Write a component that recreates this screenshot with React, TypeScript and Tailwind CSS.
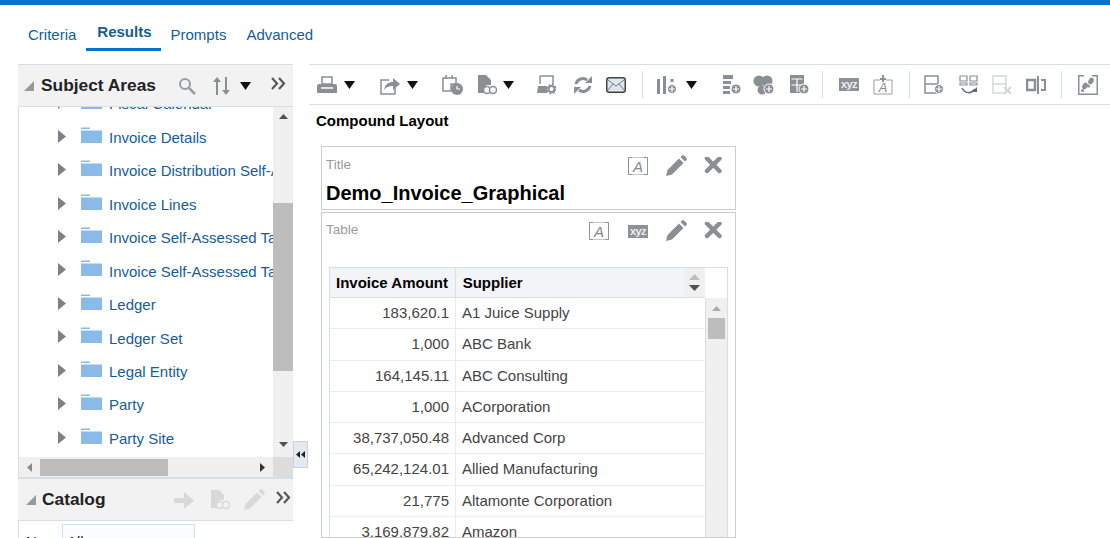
import { ReactNode } from "react";

const gray = "#8a8f94";

const Down = ({ className = "" }: { className?: string }) => (
  <svg width="13" height="8" viewBox="0 0 13 8" className={className}>
    <path d="M1 0h11L6.500 8z" fill="#111" />
  </svg>
);

const Svg = ({ w = 20, h = 20, children }: { w?: number; h?: number; children: ReactNode }) => (
  <svg width={w} height={h} viewBox={`0 0 ${w} ${h}`} className="shrink-0">
    {children}
  </svg>
);

const PlusBadge = ({ x = 14, y = 14, r = 5 }: { x?: number; y?: number; r?: number }) => (
  <g>
    <circle cx={x} cy={y} r={r} fill={gray} stroke="#fff" strokeWidth="1" />
    <path d={`M${x - 3} ${y}h6M${x} ${y - 3}v6`} stroke="#fff" strokeWidth="1.200" />
  </g>
);

const Pencil = ({ fill = gray }: { fill?: string }) => (
  <Svg w={22} h={22}>
    <path d="M1 21l1.500-6L14 3.500l4.500 4.500L7 19.500z M15.500 2l1.500-1.500a1.500 1.500 0 0 1 2 0l2.500 2.500a1.500 1.500 0 0 1 0 2L20 6.500z" fill={fill} />
  </Svg>
);

const Cross = () => (
  <Svg w={20} h={18}>
    <path d="M4 1.500l12.500 12.500M16.500 1.500L4 14" stroke={gray} strokeWidth="4.500" strokeLinecap="round" />
  </Svg>
);

const TextIcon = () => (
  <svg width="20" height="18" viewBox="0 0 20 18" className="shrink-0">
    <path d="M.500 .500h19v17H.500z" fill="none" stroke="#c4c7ca" strokeWidth="1" />
    <path d="M4 .500H.500v17H4M16 .500h3.500v17H16" fill="none" stroke="#8f9397" strokeWidth="1" />
    <text x="10" y="14.500" textAnchor="middle" fontFamily="Liberation Sans, sans-serif" fontStyle="italic" fontSize="15" fill="#85898d">A</text>
  </svg>
);

const Xyz = () => (
  <span className="w-[20px] h-[13px] bg-[#8e9296] text-[#eceef0] text-[11px] leading-[13px] text-center font-bold shrink-0 tracking-[-0.5px]">xyz</span>
);

const Folder = () => (
  <svg width="21" height="17" viewBox="0 0 21 17" className="shrink-0">
    <path d="M0 0.500h9v1.500H0z" fill="#8abbe8" />
    <path d="M0 3.500h21V16H0z" fill="#8abbe8" />
  </svg>
);

const Tri = ({ className = "" }: { className?: string }) => (
  <svg width="8" height="13" viewBox="0 0 8 13" className={className}>
    <path d="M0 0l8 6.500L0 13z" fill="#7d8185" />
  </svg>
);

const Chevrons = () => (
  <svg width="15" height="13" viewBox="0 0 15 13" className="shrink-0">
    <path d="M1 1l5 5.500L1 12M8 1l5 5.500L8 12" fill="none" stroke="#55595d" strokeWidth="2.200" />
  </svg>
);

const Corner = () => (
  <svg width="10" height="10" viewBox="0 0 10 10" className="shrink-0">
    <path d="M10 0v10H0z" fill="#9a9a9a" />
  </svg>
);

const folders = [
  "Fiscal Calendar",
  "Invoice Details",
  "Invoice Distribution Self-Assessed",
  "Invoice Lines",
  "Invoice Self-Assessed Tax",
  "Invoice Self-Assessed Tax Lines",
  "Ledger",
  "Ledger Set",
  "Legal Entity",
  "Party",
  "Party Site",
];

const rows = [
  ["183,620.1", "A1 Juice Supply"],
  ["1,000", "ABC Bank"],
  ["164,145.11", "ABC Consulting"],
  ["1,000", "ACorporation"],
  ["38,737,050.48", "Advanced Corp"],
  ["65,242,124.01", "Allied Manufacturing"],
  ["21,775", "Altamonte Corporation"],
  ["3,169,879.82", "Amazon"],
];

const Sep = ({ className = "" }: { className?: string }) => (
  <span className={`w-px h-[27px] bg-[#d6dfe6] shrink-0 ${className}`} />
);

const Toolbar = () => (
  <div className="h-[41px] border-y border-[#d6dfe6] flex items-center pl-[8px] overflow-hidden shrink-0">
    <Svg>
      <path d="M5 2h10v7H5z" fill="none" stroke={gray} strokeWidth="1.500" />
      <path d="M0 11a2 2 0 0 1 2-2h16a2 2 0 0 1 2 2v7H0z" fill={gray} />
      <path d="M4 13h12" stroke="#fff" strokeWidth="1.500" />
    </Svg>
    <Down className="ml-[6px]" />
    <span className="ml-[24px]">
      <Svg>
        <path d="M9 5H1v14h14v-6" fill="none" stroke={gray} strokeWidth="1.500" />
        <path d="M4 15c1-6 5-8 9-8V3l7 6-7 6v-4c-4 0-7 1-9 4z" fill={gray} />
      </Svg>
    </span>
    <Down className="ml-[6px]" />
    <span className="ml-[23px]">
      <Svg w={21} h={20}>
        <path d="M1 3h13v6H9v7H1z" fill="none" stroke={gray} strokeWidth="1.500" />
        <path d="M4 0v4M10 0v4" stroke={gray} strokeWidth="1.500" />
        <circle cx="15" cy="14" r="6" fill={gray} />
        <path d="M15 11v3h3" stroke="#fff" strokeWidth="1.200" fill="none" />
      </Svg>
    </span>
    <span className="ml-[14px]">
      <Svg>
        <path d="M1 0h8l5 5v5H9v8H1z" fill={gray} />
        <circle cx="10" cy="15" r="3.500" fill="#fff" stroke={gray} strokeWidth="1.500" />
        <circle cx="16" cy="15" r="3.500" fill="#fff" stroke={gray} strokeWidth="1.500" />
      </Svg>
    </span>
    <Down className="ml-[5px]" />
    <span className="ml-[21px]">
      <Svg>
        <path d="M4 1h13v8M4 1v8" fill="none" stroke={gray} strokeWidth="1.500" />
        <path d="M2 11h9v7H1z" fill={gray} />
        <circle cx="15.500" cy="14" r="3" fill="none" stroke={gray} strokeWidth="2" />
        <circle cx="15.500" cy="14" r="4.500" fill="none" stroke={gray} strokeWidth="1.500" strokeDasharray="2 1.500" />
      </Svg>
    </span>
    <span className="ml-[17px]">
      <Svg>
        <path d="M3 9a7 7 0 0 1 11-4" fill="none" stroke={gray} strokeWidth="3" />
        <path d="M17 11a7 7 0 0 1-11 4" fill="none" stroke={gray} strokeWidth="3" />
        <path d="M12 8h7V1zM8 12H1v7z" fill={gray} />
      </Svg>
    </span>
    <span className="ml-[13px]">
      <svg width="20" height="16" viewBox="0 0 20 16" className="shrink-0">
        <rect x="0.750" y="0.750" width="18.500" height="14.500" rx="2.500" fill="#dfe6ee" stroke="#3f4448" strokeWidth="1.500" />
        <path d="M2 3l8 6 8-6M2 13l5-6M18 13l-5-6" fill="none" stroke="#7a7f83" strokeWidth="1" />
      </svg>
    </span>
    <Sep className="ml-[16px]" />
    <span className="ml-[14px]">
      <Svg>
        <path d="M0 4h3v15H0zM6 1h3v18H6z" fill={gray} />
        <PlusBadge x={15} y={14} r={4.500} />
        <path d="M13.500 4h3v3h-3z" fill={gray} />
      </Svg>
    </span>
    <Down className="ml-[8px]" />
    <span className="ml-[25px]">
      <Svg w={19} h={20}>
        <path d="M0 0h10v4H0zM0 6h8v3H0zM0 11h7v3H0zM0 16h7v3H0z" fill={gray} />
        <PlusBadge x={13} y={14} r={5} />
      </Svg>
    </span>
    <span className="ml-[11px]">
      <Svg w={22} h={20}>
        <circle cx="6" cy="6" r="5.500" fill={gray} />
        <circle cx="14" cy="6" r="5.500" fill={gray} />
        <circle cx="9" cy="15" r="4.500" fill={gray} />
        <PlusBadge x={16} y={14} r={5} />
      </Svg>
    </span>
    <span className="ml-[15px]">
      <Svg>
        <path d="M0 0h14v18H0z" fill={gray} />
        <path d="M1.500 4h11M7 4v13M1.500 10h11" stroke="#fff" strokeWidth="1.200" />
        <PlusBadge x={14} y={14} r={5} />
      </Svg>
    </span>
    <Sep className="ml-[12px]" />
    <span className="ml-[16px] flex"><Xyz /></span>
    <span className="ml-[14px]">
      <svg width="20" height="20" viewBox="0 0 20 20" className="shrink-0">
        <path d="M7 5H1v14h18V5h-6" fill="none" stroke="#9a9ea2" strokeWidth="1" />
        <path d="M10 0v7M7 4h6" stroke={gray} strokeWidth="2" />
        <text x="10" y="17" textAnchor="middle" fontFamily="Liberation Sans, sans-serif" fontStyle="italic" fontSize="13" fill="#85898d">A</text>
      </svg>
    </span>
    <Sep className="ml-[16px]" />
    <span className="ml-[14px]">
      <Svg>
        <path d="M1 1h13v17H1zM1 9h13" fill="none" stroke={gray} strokeWidth="1.500" />
        <PlusBadge x={15} y={14} r={4.500} />
      </Svg>
    </span>
    <span className="ml-[15px]">
      <Svg>
        <path d="M1 1h7v5H1zM11 1h7v5h-7zM1 8h7v2H1zM11 8h7v2h-7z" fill="none" stroke={gray} strokeWidth="1.200" />
        <path d="M3 13c3 6 9 6 13 1" fill="none" stroke="#666a6e" strokeWidth="1.500" />
        <path d="M18 12v5h-5z" fill="#666a6e" />
      </Svg>
    </span>
    <span className="ml-[13px]">
      <Svg>
        <path d="M1 1h13v17H1zM1 9h13" fill="none" stroke="#d5d7d9" strokeWidth="1.500" />
        <path d="M12 12l7 7M19 12l-7 7" stroke="#d5d7d9" strokeWidth="2" />
      </Svg>
    </span>
    <span className="ml-[14px]">
      <Svg>
        <path d="M1 5h8v10H1z" fill="none" stroke={gray} strokeWidth="2.500" />
        <path d="M12 1v18M15 5h4v10h-4" fill="none" stroke={gray} strokeWidth="2" />
      </Svg>
    </span>
    <Sep className="ml-[15px]" />
    <span className="ml-[16px]">
      <Svg>
        <path d="M6 .750H.750V19.250H19.250V.750H14" fill="none" stroke={gray} strokeWidth="1.500" />
        <ellipse cx="13" cy="6" rx="2.500" ry="3.500" fill={gray} transform="rotate(30 13 6)" />
        <ellipse cx="7" cy="11" rx="2.500" ry="3.500" fill={gray} transform="rotate(30 7 11)" />
        <circle cx="4.500" cy="15.500" r="1.500" fill={gray} />
        <circle cx="10.500" cy="11" r="1.500" fill={gray} />
      </Svg>
    </span>
  </div>
);

const TreePanel = () => (
  <div className="w-[275px] shrink-0 flex flex-col">
    <div className="h-[43px] border-y border-[#d6dfe6] bg-[#f2f2f2] flex items-center pl-[6px] shrink-0">
      <Corner />
      <span className="ml-[7px] text-[17.330px] font-bold text-[#222]">Subject Areas</span>
      <span className="ml-[22px]">
        <Svg w={18} h={18}>
          <circle cx="7" cy="7" r="5" fill="none" stroke="#9a9ea2" strokeWidth="2" />
          <path d="M11 11l6 6" stroke="#9a9ea2" strokeWidth="2.500" />
        </Svg>
      </span>
      <span className="ml-[16px]">
        <Svg w={19} h={20}>
          <path d="M5 1L1 6h3v13h2V6h3zM14 19l4-5h-3V1h-2v13h-3z" fill={gray} />
        </Svg>
      </span>
      <Down className="ml-[8px]" />
      <span className="ml-[19px] -mt-[5px] flex"><Chevrons /></span>
    </div>

    <div className="h-[350px] flex shrink-0 overflow-hidden">
      <div className="w-[255px] border-l border-[#d6dfe6] overflow-hidden">
        <div className="-mt-[19px]">
          {folders.map((f) => (
            <div key={f} className="flex items-center h-[33.45px] pl-[39px]">
              <Tri className="shrink-0 -mt-[4px]" />
              <span className="ml-[15px] -mt-[6px] flex"><Folder /></span>
              <span className="ml-[7px] text-[15px] text-[#145c9e] whitespace-nowrap">{f}</span>
            </div>
          ))}
        </div>
      </div>
      <div className="w-[20px] bg-[#f0f0f0] flex flex-col items-center shrink-0">
        <svg width="9" height="5" viewBox="0 0 9 5" className="mt-[7px]"><path d="M0 5h9L4.500 0z" fill="#505050" /></svg>
        <div className="w-full h-[168px] bg-[#bdbdbd] mt-[84px]" />
        <svg width="9" height="5" viewBox="0 0 9 5" className="mt-[71px]"><path d="M0 0h9L4.500 5z" fill="#505050" /></svg>
      </div>
    </div>

    <div className="h-[21px] flex shrink-0 border-b border-[#d6dfe6]">
      <div className="w-[255px] bg-[#f0f0f0] flex items-center border-l border-[#d6dfe6]">
        <svg width="5" height="9" viewBox="0 0 5 9" className="ml-[8px]"><path d="M5 0v9L0 4.500z" fill="#8c8c8c" /></svg>
        <div className="w-[128px] h-[17px] bg-[#bdbdbd] ml-[8px]" />
        <svg width="5" height="9" viewBox="0 0 5 9" className="ml-[92px]"><path d="M0 0v9l5-4.500z" fill="#333" /></svg>
      </div>
      <div className="w-[20px] bg-[#dcdcdc]" />
    </div>

    <div className="h-[43px] border-y border-[#d6dfe6] bg-[#f2f2f2] flex items-center pl-[8px] shrink-0">
      <Corner />
      <span className="ml-[6px] text-[17.330px] font-bold text-[#222]">Catalog</span>
      <span className="ml-[68px] flex">
        <Svg>
          <path d="M0 8h10V2l10 8.500L10 19v-6H0z" fill="#d8d8d8" />
        </Svg>
      </span>
      <span className="ml-[16px] flex">
        <Svg>
          <path d="M1 0h8l5 5v5H9v8H1z" fill="#d8d8d8" />
          <circle cx="10" cy="15" r="3.500" fill="#f2f2f2" stroke="#d8d8d8" strokeWidth="1.500" />
          <circle cx="16" cy="15" r="3.500" fill="#f2f2f2" stroke="#d8d8d8" strokeWidth="1.500" />
        </Svg>
      </span>
      <span className="ml-[13px] flex"><Pencil fill="#d8d8d8" /></span>
      <span className="ml-[11px] -mt-[5px] flex"><Chevrons /></span>
    </div>

    <div className="flex pl-[7px] pt-[3px] border-l border-[#d6dfe6] text-[15px] leading-[17px] text-[#222]">
      <span className="w-[36px] pt-[9px]">Name</span>
      <span className="w-[133px] h-[26px] border border-[#d6dfe6] bg-[#fbfcfe] pl-[4px] pt-[8px]">All</span>
    </div>
  </div>
);

const DataTable = () => (
  <div className="mt-[23px] mx-[7px] border-t border-l border-[#d6dfe6] flex flex-col">
    <div className="flex h-[30px] shrink-0">
      <div className="w-[126px] bg-[#f2f4f8] border-r border-b border-[#d6dfe6] flex items-center pl-[6px] pt-[2px] text-[15px] font-bold text-black whitespace-nowrap">
        Invoice Amount
      </div>
      <div className="w-[250px] bg-[#f2f4f8] border-b border-[#d6dfe6] flex items-center pl-[7px] pt-[2px] text-[15px] font-bold text-black relative">
        Supplier
        <span className="absolute right-0 top-0 w-[21px] h-full bg-[#f0f0f0] flex flex-col items-center justify-center gap-[5px]">
          <svg width="11" height="6" viewBox="0 0 11 6"><path d="M0 6h11L5.500 0z" fill="#bdbdbd" /></svg>
          <svg width="11" height="6" viewBox="0 0 11 6"><path d="M0 0h11L5.500 6z" fill="#505050" /></svg>
        </span>
      </div>
      <div className="w-[23px] border-r border-[#d6dfe6]" />
    </div>
    <div className="flex">
      <div className="w-[376px]">
        {rows.map((r) => (
          <div key={r[1]} className="flex h-[31.3px] border-b border-[#e8ecf1] text-[15px] text-[#444]">
            <div className="w-[126px] border-r border-[#e8ecf1] text-right pr-[6px] leading-[30px] whitespace-nowrap">{r[0]}</div>
            <div className="pl-[6px] leading-[30px] whitespace-nowrap">{r[1]}</div>
          </div>
        ))}
      </div>
      <div className="w-[23px] border-x border-[#d6dfe6] bg-[#f0f0f0] flex flex-col items-center">
        <svg width="9" height="5" viewBox="0 0 9 5" className="mt-[8px]"><path d="M0 5h9L4.500 0z" fill="#aaa" /></svg>
        <div className="w-[17px] h-[21px] bg-[#bdbdbd] mt-[7px]" />
      </div>
    </div>
  </div>
);

export default function App() {
  return (
    <div className="w-[1110px] h-[538px] overflow-hidden bg-white flex flex-col font-['Liberation_Sans',Arial,sans-serif]">
      <div className="h-[5px] bg-[#0572ce] shrink-0" />
      <div className="h-[59px] shrink-0 flex pl-[18px] pt-[15px] items-start text-[15px] text-[#145c9e]">
        <div className="h-[31px] px-[10px] pt-[4px]">Criteria</div>
        <div className="h-[31px] pl-[11px] pr-[9px] pt-[1px] border-b-[3px] border-[#0572ce] font-bold">Results</div>
        <div className="h-[31px] pl-[10px] pr-[20px] pt-[4px]">Prompts</div>
        <div className="h-[31px] pt-[4px]">Advanced</div>
      </div>

      <div className="flex pl-[18px] min-h-0 flex-1">
        <TreePanel />
        <div className="w-[16px] shrink-0 pt-[377px]">
          <div className="w-[15px] h-[27px] bg-[#e4e9ef] border border-[#c9d2db] flex items-center justify-center gap-[1px]">
            <svg width="4" height="7" viewBox="0 0 4 7"><path d="M4 0v7L0 3.500z" fill="#222" /></svg>
            <svg width="4" height="7" viewBox="0 0 4 7"><path d="M4 0v7L0 3.500z" fill="#222" /></svg>
          </div>
        </div>
        <div className="flex-1 min-w-0 flex flex-col">
          <Toolbar />
          <div className="pl-[7px] h-[41px] pt-[7px] text-[15px] leading-[17px] font-bold text-black shrink-0">Compound Layout</div>
          <div className="ml-[12px] w-[415px] h-[64px] border border-[#ccc] px-[4px] shrink-0 flex flex-col">
            <div className="flex items-center justify-between h-[34px] shrink-0 text-[13.500px] text-[#9a9a9a]">
              <span className="mt-[2px]">Title</span>
              <div className="flex items-center gap-[16px] pr-[8px] mt-[4px]">
                <span className="mr-[1px] flex"><TextIcon /></span>
                <Pencil />
                <Cross />
              </div>
            </div>
            <div className="text-[20px] leading-[24px] font-bold text-black">Demo_Invoice_Graphical</div>
          </div>
          <div className="ml-[12px] mt-[2px] w-[415px] flex-1 min-h-0 overflow-hidden border border-[#ccc]">
            <div className="flex items-center justify-between h-[31px] px-[4px] text-[13.500px] text-[#9a9a9a]">
              <span className="mt-[4px]">Table</span>
              <div className="flex items-center gap-[16px] pr-[8px] mt-[5px]">
                <span className="mr-[3px] flex"><TextIcon /></span>
                <span className="mr-[1px] flex"><Xyz /></span>
                <Pencil />
                <Cross />
              </div>
            </div>
            <DataTable />
          </div>
        </div>
      </div>
    </div>
  );
}
